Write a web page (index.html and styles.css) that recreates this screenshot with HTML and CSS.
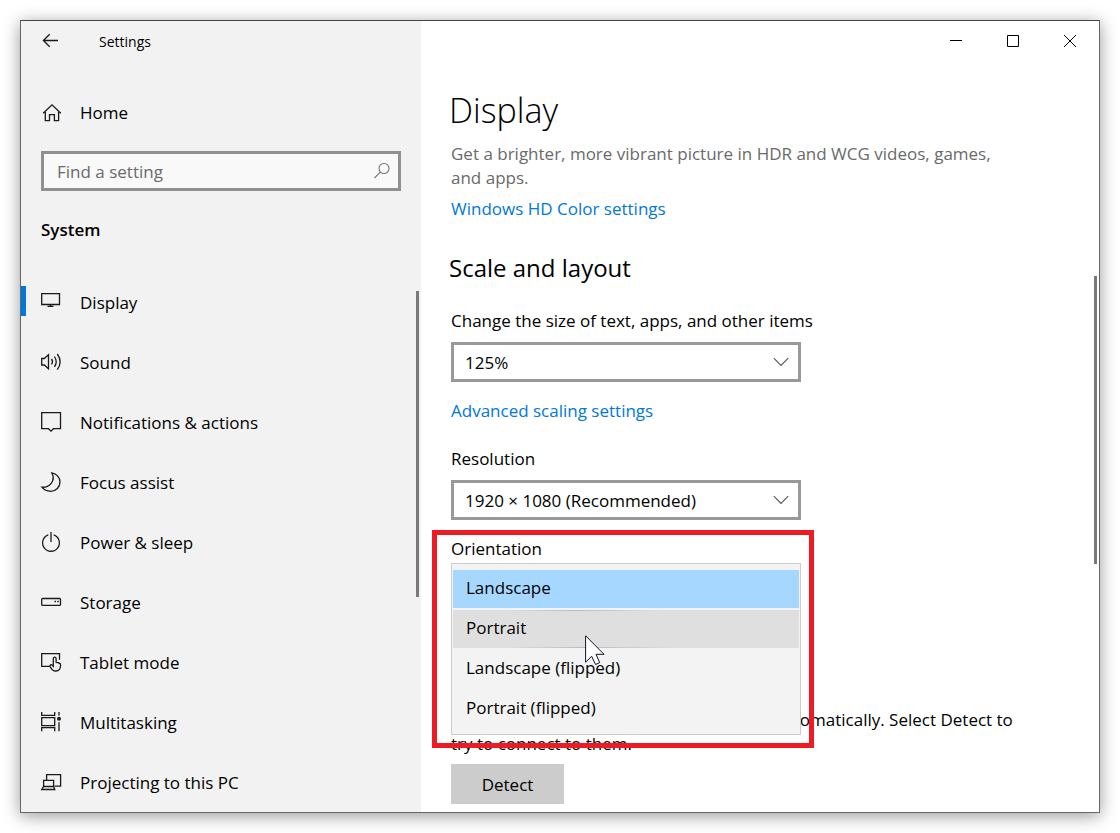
FILE: index.html
```html
<!DOCTYPE html>
<html lang="en">
<head>
<meta charset="utf-8">
<title>Settings</title>
<link rel="stylesheet" href="styles.css">
</head>
<body>
<div class="window">
  <aside class="sidebar">
    <header class="sidebar-bar">
      <button class="back" type="button" aria-label="Back">
        <svg class="icon" viewBox="0 0 20 20"><path d="M17 9.5H2.5M8.700 3.200L2.400 9.500l6.300 6.300"/></svg>
      </button>
      <span class="app-title">Settings</span>
    </header>
    <a class="nav-link home" href="#home">
      <svg class="icon" viewBox="0 0 20 20"><path d="M2.200 10.300L11 1.800l8.800 8.500M4.300 9v8.700h4.200v-6h4.900v6h4.200V9"/></svg>
      <span>Home</span>
    </a>
    <div class="search">
      <input class="search-input" type="search" placeholder="Find a setting" aria-label="Find a setting">
      <svg class="search-icon" viewBox="0 0 18 18"><circle cx="11" cy="6.500" r="5"/><path d="M7.300 10.200L1.500 16"/></svg>
    </div>
    <h2 class="group-title">System</h2>
    <nav class="nav">
      <a class="nav-link active" href="#display" aria-current="page">
        <svg class="icon" viewBox="0 0 20 20"><path d="M.7 1.700h17.800v10.800H.7zM9.500 12.500v2M6.500 14.400h6"/></svg>
        <span>Display</span>
      </a>
      <a class="nav-link" href="#sound">
        <svg class="icon" viewBox="0 0 20 20"><path d="M.7 6.500v6.500h2.600l4.200 3.700V2.800L3.300 6.500zM10.500 7q2 2.700 0 5.400M13.400 4.500q3.600 5.200 0 10.400M16.300 2q5.600 7.700 0 15.700"/></svg>
        <span>Sound</span>
      </a>
      <a class="nav-link" href="#notifications">
        <svg class="icon" viewBox="0 0 20 20"><path d="M.7.7h18.800v16H12.500L10 19.200l-2.500-2.500H.7z"/></svg>
        <span>Notifications &amp; actions</span>
      </a>
      <a class="nav-link" href="#focus">
        <svg class="icon" viewBox="0 0 20 20"><path d="M10.800.8c5 .8 8.200 4.800 8.200 9.300 0 5-4 9.200-9.200 9.200-3.700 0-7-1.700-8.900-4.100 6.500.5 14.500-5.400 9.900-14.400z"/></svg>
        <span>Focus assist</span>
      </a>
      <a class="nav-link" href="#power">
        <svg class="icon" viewBox="0 0 20 20"><path d="M7.300 2.900a8.400 8.400 0 1 0 5.400 0M10 0v10"/></svg>
        <span>Power &amp; sleep</span>
      </a>
      <a class="nav-link" href="#storage">
        <svg class="icon" viewBox="0 0 20 20"><rect x=".7" y="6.500" width="18.800" height="6.900" rx="1"/><path d="M13.500 9.500h1.500M16.300 9.500h1.500"/></svg>
        <span>Storage</span>
      </a>
      <a class="nav-link" href="#tablet">
        <svg class="icon" viewBox="0 0 20 20"><path d="M8.500 14.400H.7V1.700h17.800v6M12.300 12.500V6.700c0-2 2.800-2 2.800 0v3.600l3 .7c1.200.3 1.600 1 1.500 2.200-.1 3.400-1.700 5.800-4.800 5.800-2.800 0-4.400-1.700-5.700-4.600-.4-1.400 1-2.200 2-1.300l1.200 1.300z"/></svg>
        <span>Tablet mode</span>
      </a>
      <a class="nav-link" href="#multitasking">
        <svg class="icon" viewBox="0 0 20 20"><path d="M.7 0v3.400h13V0M.7 5.700h13v8H.7zM.7 19.200v-3.500h13v3.500M18 0v3.400M18 10.300v8.900"/><circle class="solid" cx="18" cy="6.800" r="2"/></svg>
        <span>Multitasking</span>
      </a>
      <a class="nav-link" href="#projecting">
        <svg class="icon" viewBox="0 0 20 20"><path d="M5.600 8V2.600h14v11.600h-6M2.600 14.300V8.400h10v5.900M2.600 14.500h10l1.200 3H.8z"/></svg>
        <span>Projecting to this PC</span>
      </a>
    </nav>
    <div class="scroll-thumb scroll-thumb-side"></div>
  </aside>

  <main class="main">
    <header class="window-controls">
      <button class="control" type="button" aria-label="Minimize"><svg viewBox="0 0 12 12"><path d="M0 5.500h12"/></svg></button>
      <button class="control" type="button" aria-label="Maximize"><svg viewBox="0 0 12 12"><path d="M.5.5h11v11H.5z"/></svg></button>
      <button class="control" type="button" aria-label="Close"><svg viewBox="0 0 12 12"><path d="M0 0l12 12M12 0L0 12"/></svg></button>
    </header>
    <div class="content">
      <h1 class="page-title">Display</h1>
      <p class="text muted">Get a brighter, more vibrant picture in HDR and WCG videos, games, and apps.</p>
      <a class="link" href="#hd-color">Windows HD Color settings</a>
      <h2 class="section-title">Scale and layout</h2>

      <label class="label" for="scale">Change the size of text, apps, and other items</label>
      <div class="select-box">
        <select class="select" id="scale"><option>125%</option></select>
        <svg class="chevron" viewBox="0 0 16 10"><path d="M.8 1.200L8 8.400l7.200-7.200"/></svg>
      </div>
      <a class="link link-scaling" href="#scaling">Advanced scaling settings</a>

      <label class="label" for="resolution">Resolution</label>
      <div class="select-box">
        <select class="select" id="resolution"><option>1920 × 1080 (Recommended)</option></select>
        <svg class="chevron" viewBox="0 0 16 10"><path d="M.8 1.200L8 8.400l7.200-7.200"/></svg>
      </div>

      <section class="orientation">
        <span class="label" id="orientation-label">Orientation</span>
        <div class="popup" role="listbox" aria-labelledby="orientation-label">
          <button class="choice selected" type="button" role="option" aria-selected="true">Landscape</button>
          <button class="choice hovered" type="button" role="option" aria-selected="false">Portrait</button>
          <button class="choice" type="button" role="option" aria-selected="false">Landscape (flipped)</button>
          <button class="choice" type="button" role="option" aria-selected="false">Portrait (flipped)</button>
          <svg class="cursor" viewBox="0 0 20 30"><path d="M.6.8v26.400l6.100-5.900 3.800 8.200 4.200-1.900-3.700-8.300h8z"/></svg>
        </div>
        <div class="highlight"></div>
      </section>

      <p class="text detect-text">Older displays might not always connect automatically. Select Detect to try to connect to them.</p>
      <button class="detect" type="button">Detect</button>
    </div>
    <div class="scroll-thumb scroll-thumb-main"></div>
  </main>
</div>
</body>
</html>
```

FILE: styles.css
```css
* {
  box-sizing: border-box;
}

body {
  margin: 0;
  padding: 20px;
  min-height: 100vh;
  display: flex;
  background: #fff;
  color: #000;
  font-family: "Open Sans", "Noto Sans", sans-serif;
  font-size: 17px;
  line-height: 24px;
}

h1, h2, p {
  margin: 0;
}

button, input, select {
  margin: 0;
  font: inherit;
  color: inherit;
}

.window {
  flex: 1;
  display: grid;
  grid-template-columns: 400px 1fr;
  border: 1px solid #666;
  border-top-color: #444;
  background: #fff;
  box-shadow: 0 3px 16px rgba(0, 0, 0, 0.4);
}

.sidebar {
  position: relative;
  background: #f2f2f2;
}

.sidebar-bar {
  display: flex;
  align-items: center;
  gap: 38px;
  height: 40px;
  padding-left: 20px;
  margin-bottom: 30px;
}

.back {
  display: flex;
  padding: 0;
  border: 0;
  background: none;
}

.app-title {
  padding-top: 2px;
  font-size: 14px;
}

.icon {
  flex: none;
  width: 20px;
  height: 20px;
  overflow: visible;
  fill: none;
  stroke: #1a1a1a;
  stroke-width: 1.3;
}

.icon .solid {
  fill: #1a1a1a;
  stroke: none;
}

.nav-link {
  position: relative;
  display: flex;
  align-items: center;
  gap: 19px;
  height: 60px;
  padding-left: 20px;
  color: #000;
  text-decoration: none;
}

.nav .nav-link span {
  padding-top: 2px;
}

.nav-link.home {
  height: 44px;
}

.nav-link.active::before {
  content: "";
  position: absolute;
  left: 0;
  top: 14px;
  width: 5px;
  height: 30px;
  background: #0078d7;
}

.search {
  position: relative;
  margin: 16px 20px 27px;
}

.search-input {
  display: block;
  width: 100%;
  height: 40px;
  padding: 0 40px 0 13px;
  border: 3px solid #8f908f;
  border-radius: 0;
  outline: 0;
  background: #f9f9f9;
  appearance: none;
}

.search-input::placeholder {
  color: #6a6a6a;
}

.search-icon {
  position: absolute;
  right: 10px;
  top: 11px;
  width: 18px;
  height: 18px;
  fill: none;
  stroke: #777;
  stroke-width: 1.1;
}

.group-title {
  padding-left: 20px;
  margin-bottom: 30px;
  font-size: 17px;
  font-weight: 600;
}

.scroll-thumb {
  position: absolute;
  width: 3px;
  background: #7a7a7a;
}

.scroll-thumb-side {
  right: 2px;
  top: 270px;
  height: 306px;
}

.scroll-thumb-main {
  right: 2px;
  top: 255px;
  height: 288px;
}

.main {
  position: relative;
}

.window-controls {
  display: flex;
  justify-content: flex-end;
  padding-right: 1px;
}

.control {
  display: flex;
  align-items: center;
  justify-content: center;
  width: 57px;
  height: 40px;
  padding: 0;
  border: 0;
  background: none;
}

.control svg {
  width: 12px;
  height: 12px;
  fill: none;
  stroke: #000;
  stroke-width: 1;
}

.content {
  padding: 25px 30px 7px;
}

.page-title {
  margin: 0 0 8px -2px;
  font-size: 34px;
  font-weight: 300;
  line-height: 48px;
}

.text {
  max-width: 572px;
}

.muted {
  max-width: 552px;
  margin-bottom: 7px;
  color: #6a6a6a;
}

.link {
  display: block;
  width: fit-content;
  color: #0078d7;
  text-decoration: none;
}

.section-title {
  margin: 31px 0 25px -2px;
  font-size: 24px;
  font-weight: 400;
  line-height: 32px;
}

.label {
  display: block;
  margin-bottom: 9px;
}

.select-box {
  position: relative;
  max-width: 350px;
}

.select {
  display: block;
  width: 100%;
  height: 40px;
  padding: 2px 40px 0 11px;
  border: 3px solid #999;
  border-radius: 0;
  background: #fff;
  appearance: none;
}

.chevron {
  position: absolute;
  right: 12px;
  top: 15px;
  width: 16px;
  height: 10px;
  fill: none;
  stroke: #555;
  stroke-width: 1.1;
  pointer-events: none;
}

.link-scaling {
  margin: 17px 0 24px;
}

.orientation {
  position: relative;
  max-width: 350px;
  height: 171px;
  margin-top: 17px;
}

.popup {
  position: absolute;
  z-index: 1;
  left: 0;
  right: 0;
  top: 26px;
  padding: 5px 1px;
  border: 1px solid #ccc;
  background: #f3f3f3;
}

.choice {
  display: block;
  width: 100%;
  height: 40px;
  padding: 0 13px 2px;
  border: 0 solid transparent;
  border-width: 1px 0;
  background: none;
  background-clip: padding-box;
  text-align: left;
}

.choice.selected {
  background-color: #a6d8ff;
}

.choice.hovered {
  background-color: #dfdfdf;
  background-image:
    linear-gradient(90deg, transparent 15%, #bbb 35%, transparent 60%),
    linear-gradient(90deg, transparent 15%, #bbb 38%, transparent 65%);
  background-position: top, bottom;
  background-size: 100% 1px;
  background-repeat: no-repeat;
}

.cursor {
  position: absolute;
  left: 133px;
  top: 71px;
  width: 20px;
  height: 30px;
  fill: #fff;
  stroke: #112;
  stroke-width: 1;
}

.highlight {
  position: absolute;
  z-index: 2;
  inset: -7px -13px -40px -19px;
  border: 5px solid #ed1c24;
  pointer-events: none;
}

.detect-text {
  margin-bottom: 8px;
}

.detect {
  min-width: 113px;
  height: 40px;
  padding: 2px 24px 0;
  border: 0;
  background: #ccc;
}
```
